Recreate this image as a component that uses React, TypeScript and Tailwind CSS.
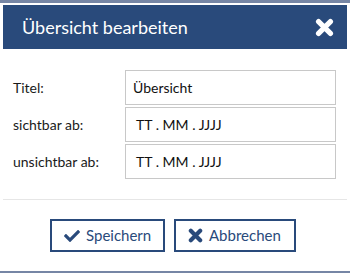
import { FaCheck } from 'react-icons/fa'

// ─── Icons ────────────────────────────────────────────────────────────────────

function HeavyX({ size, className }: { size: number; className?: string }) {
  return (
    <svg width={size} height={size} viewBox="0 0 16 16" className={className}>
      <path d="M3 3L13 13M13 3L3 13" stroke="currentColor" strokeWidth={4.4} strokeLinecap="round" />
    </svg>
  )
}

// ─── Field row ────────────────────────────────────────────────────────────────

function FieldRow({ label, value, indent }: { label: string; value: string; indent?: boolean }) {
  return (
    <div className="flex items-center">
      <span className="w-[112px] shrink-0 text-[14px] text-[#1a1a1a]">{label}</span>
      <div
        className={`flex h-[35px] w-[211px] items-center border border-[#c8c8c8] text-[14px] text-[#111] ${
          indent ? 'pl-[10px]' : 'pl-[7px]'
        }`}
      >
        {value}
      </div>
    </div>
  )
}

// ─── Component ────────────────────────────────────────────────────────────────

export default function App() {
  return (
    <div className="h-[273px] w-[350px] bg-[#7686a5] pt-[3px]" style={{ fontFamily: 'Lato, "Open Sans", sans-serif' }}>
      <div className="flex h-[268px] flex-col bg-white px-[3px] pt-[2px]">
        {/* Header */}
        <div className="flex h-[44px] items-center justify-between bg-[#294a7b] pl-[19px] pr-[13px]">
          <span className="text-[18px] text-white">Übersicht bearbeiten</span>
          <HeavyX className="text-white" size={19} />
        </div>

        {/* Form */}
        <div className="flex flex-col gap-[2px] px-[10px] pt-[21px]">
          <FieldRow label="Titel:" value="Übersicht" />
          <FieldRow label="sichtbar ab:" value="TT . MM . JJJJ" indent />
          <FieldRow label="unsichtbar ab:" value="TT . MM . JJJJ" indent />
        </div>

        <div className="mt-[20px] h-px bg-[#e6e6e6]" />

        {/* Actions */}
        <div className="flex justify-center gap-[9px] pt-[19px] pr-[4px]">
          <button className="flex h-[33px] w-[115px] items-center gap-[6px] border-2 border-[#294a7b] pl-[12px] text-[15px] text-[#294a7b]">
            <FaCheck size={16} />
            Speichern
          </button>
          <button className="flex h-[33px] w-[122px] items-center gap-[6px] border-2 border-[#294a7b] pl-[12px] text-[15px] text-[#294a7b]">
            <HeavyX size={15} />
            Abbrechen
          </button>
        </div>
      </div>
    </div>
  )
}
